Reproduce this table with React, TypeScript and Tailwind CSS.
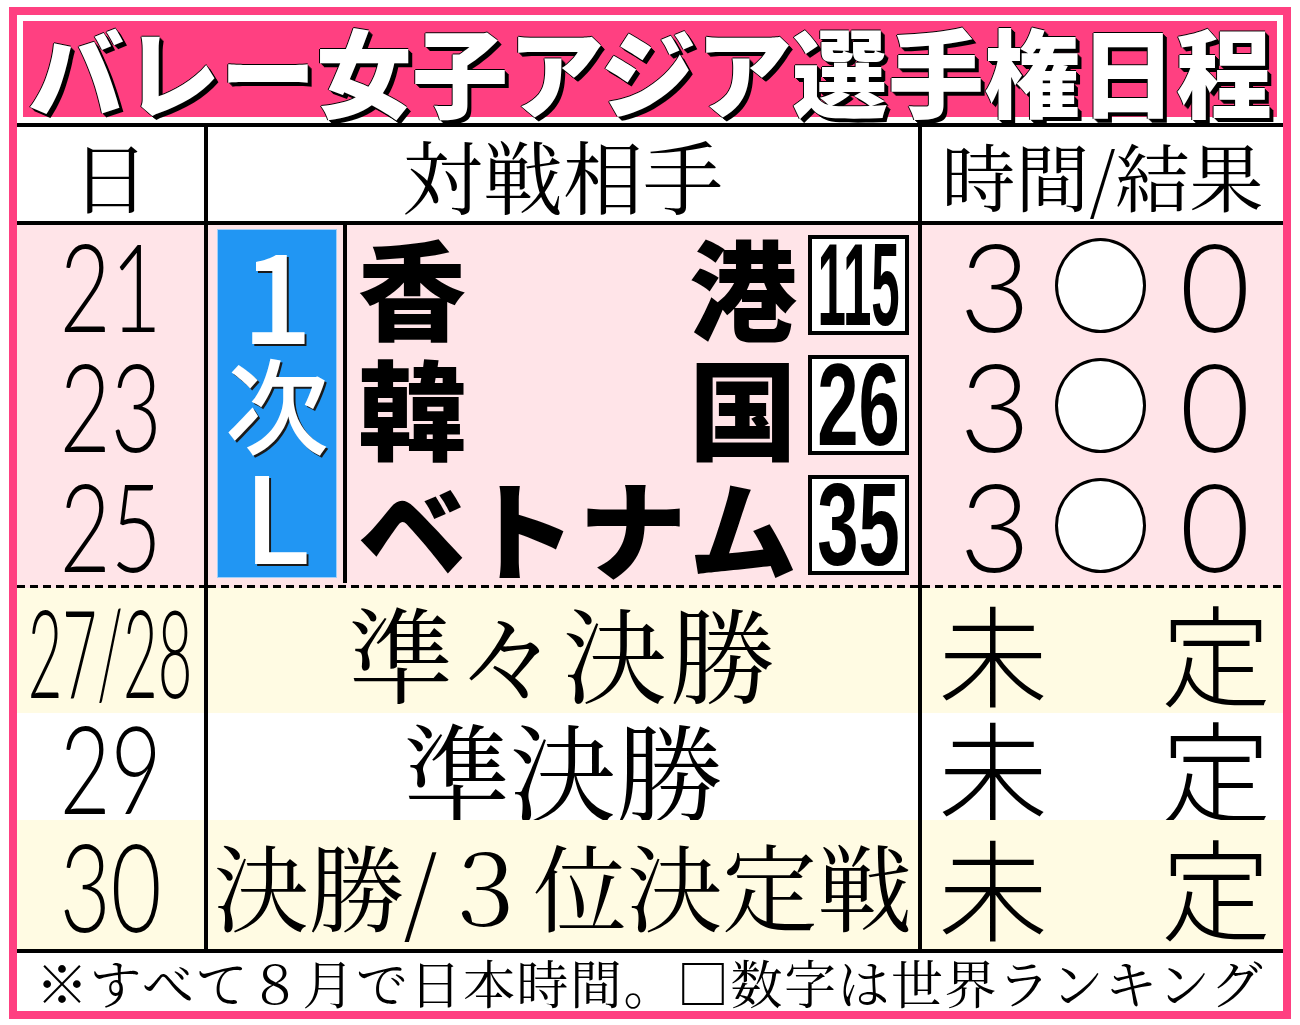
const thin = "font-['Lato','Inter','Noto_Sans_CJK_JP',sans-serif] font-light";
const gothic = "font-['Noto_Sans_CJK_JP','Liberation_Sans',sans-serif]";
const mincho = "font-['Noto_Serif_CJK_JP','Liberation_Serif','Noto_Sans_CJK_JP',serif]";
const cols = "grid grid-cols-[187px_4px_710px_4px_361px]";

const groupRows = [
  { day: "21", left: "香", right: "港", rank: "115", rankScale: "scale-x-[0.44]" },
  { day: "23", left: "韓", right: "国", rank: "26", rankScale: "scale-x-[0.64]" },
  { day: "25", left: "", right: "", rank: "35", rankScale: "scale-x-[0.64]" },
];

function DayNum({ text, scale }: { text: string; scale: string }) {
  return (
    <div className="flex items-center justify-center">
      <span className={`inline-block ${thin} text-[122px] leading-[100px] text-black ${scale}`}>{text}</span>
    </div>
  );
}

function Result() {
  return (
    <div className="flex items-center pl-[30px]">
      <span className={`w-[86px] text-center ${thin} text-[122px] leading-[100px]`}>3</span>
      <span className="ml-[17px] w-[91px] h-[95px] rounded-[50%] border-[3px] border-black bg-white" />
      <span className={`ml-[26px] w-[86px] text-center ${thin} text-[122px] leading-[100px]`}>0</span>
    </div>
  );
}

function Pending() {
  return (
    <div className={`flex items-center justify-between pl-[16px] pr-[12px] ${gothic} font-light text-[110px] leading-[100px]`}>
      <span>未</span>
      <span>定</span>
    </div>
  );
}

function LowerRow({
  bg,
  height,
  day,
  dayScale,
  children,
}: {
  bg: string;
  height: string;
  day: string;
  dayScale: string;
  children: React.ReactNode;
}) {
  return (
    <div className={`${cols} ${bg} ${height}`}>
      <DayNum text={day} scale={dayScale} />
      <div className="bg-black" />
      <div className="flex items-center justify-center">{children}</div>
      <div className="bg-black" />
      <Pending />
    </div>
  );
}

export default function App() {
  return (
    <div className="w-[1300px] h-[1025px] bg-white pt-[7px] pl-[9px]">
      <div className="w-[1282px] h-[1012px] border-[8px] border-[#ff4081] bg-white flex flex-col text-black">
        {/* title */}
        <div className="p-[6px]">
          <div className="h-[96px] bg-[#ff4081] flex items-center justify-center">
            <h1
              className={`${gothic} font-black text-[96px] leading-none text-white [text-shadow:1px_1px_0_#000,2px_2px_0_#000,3px_3px_0_#000,4px_4px_0_#000,-1px_0_0_#000,0_-1px_0_#000]`}
            >
              バレー女子アジア選手権日程
            </h1>
          </div>
        </div>
        <div className="h-[4px] bg-black" />

        {/* header */}
        <div className={`${cols} h-[94px] bg-white ${mincho} leading-none`}>
          <div className="flex items-center justify-center text-[78px]">日</div>
          <div className="bg-black" />
          <div className="flex items-center justify-center text-[80px]">対戦相手</div>
          <div className="bg-black" />
          <div className="flex items-center justify-center text-[74px]">時間/結果</div>
        </div>
        <div className="h-[4px] bg-black" />

        {/* first round */}
        <div className={`${cols} h-[360px] bg-[#ffe4e8]`}>
          <div className="grid grid-rows-3">
            {groupRows.map((r) => (
              <DayNum key={r.day} text={r.day} scale="scale-x-[0.72]" />
            ))}
          </div>
          <div className="bg-black" />
          <div className="flex">
            <div className="pl-[9px] pt-[4px] pb-[7px]">
              <div
                className={`w-[120px] h-full bg-[#2196f3] border border-[#9fd0fa] flex flex-col items-center pt-[4px] ${gothic} font-medium leading-none text-white [text-shadow:2px_2px_0_#1a1a1a]`}
              >
                <span className="h-[112px] flex items-center text-[124px]">1</span>
                <span className="h-[112px] flex items-center text-[104px]">次</span>
                <span className="h-[108px] flex items-center text-[120px]">L</span>
              </div>
            </div>
            <div className="ml-[6px] w-[4px] bg-black mb-[2px]" />
            <div className="flex-1 grid grid-rows-3 pl-[11px] pr-[9px]">
              {groupRows.map((r) => (
                <div key={r.day} className="flex items-center">
                  <div className={`flex-1 flex justify-between ${gothic} font-black text-[108px] leading-none`}>
                    {r.left ? (
                      <>
                        <span>{r.left}</span>
                        <span>{r.right}</span>
                      </>
                    ) : (
                      <>
                        <span>ベ</span>
                        <span>ト</span>
                        <span>ナ</span>
                        <span>ム</span>
                      </>
                    )}
                  </div>
                  <div className="ml-[11px] w-[101px] h-[100px] border-[4px] border-black bg-white flex items-center justify-center">
                    <span className={`inline-block font-['Liberation_Sans',sans-serif] font-bold text-[116px] leading-[92px] ${r.rankScale}`}>
                      {r.rank}
                    </span>
                  </div>
                </div>
              ))}
            </div>
          </div>
          <div className="bg-black" />
          <div className="grid grid-rows-3">
            <Result />
            <Result />
            <Result />
          </div>
        </div>

        {/* dashed divider */}
        <div className={`${cols} h-[3px] bg-[#ffe4e8]`}>
          <div className="bg-[repeating-linear-gradient(90deg,#000_0_8px,transparent_8px_13px)]" />
          <div className="bg-black" />
          <div className="bg-[repeating-linear-gradient(90deg,#000_0_8px,transparent_8px_13px)]" />
          <div className="bg-black" />
          <div className="bg-[repeating-linear-gradient(90deg,#000_0_8px,transparent_8px_13px)]" />
        </div>

        <LowerRow bg="bg-[#fffbe3]" height="h-[125px]" day="27/28" dayScale="scale-x-[0.49]">
          <span className={`${mincho} text-[104px] leading-none tracking-[3px]`}>準々決勝</span>
        </LowerRow>
        <LowerRow bg="bg-white" height="h-[107px]" day="29" dayScale="scale-x-[0.72]">
          <span className={`${mincho} text-[106px] leading-none`}>準決勝</span>
        </LowerRow>
        <LowerRow bg="bg-[#fffbe3]" height="h-[129px]" day="30" dayScale="scale-x-[0.72]">
          <span className={`${mincho} text-[95px] leading-none`}>決勝/３位決定戦</span>
        </LowerRow>
        <div className="h-[4px] bg-black" />

        {/* footnote */}
        <div className={`flex-1 flex items-center justify-center ${mincho} text-[52px] leading-none tracking-[1.5px]`}>
          ※すべて８月で日本時間。□数字は世界ランキング
        </div>
      </div>
    </div>
  );
}
